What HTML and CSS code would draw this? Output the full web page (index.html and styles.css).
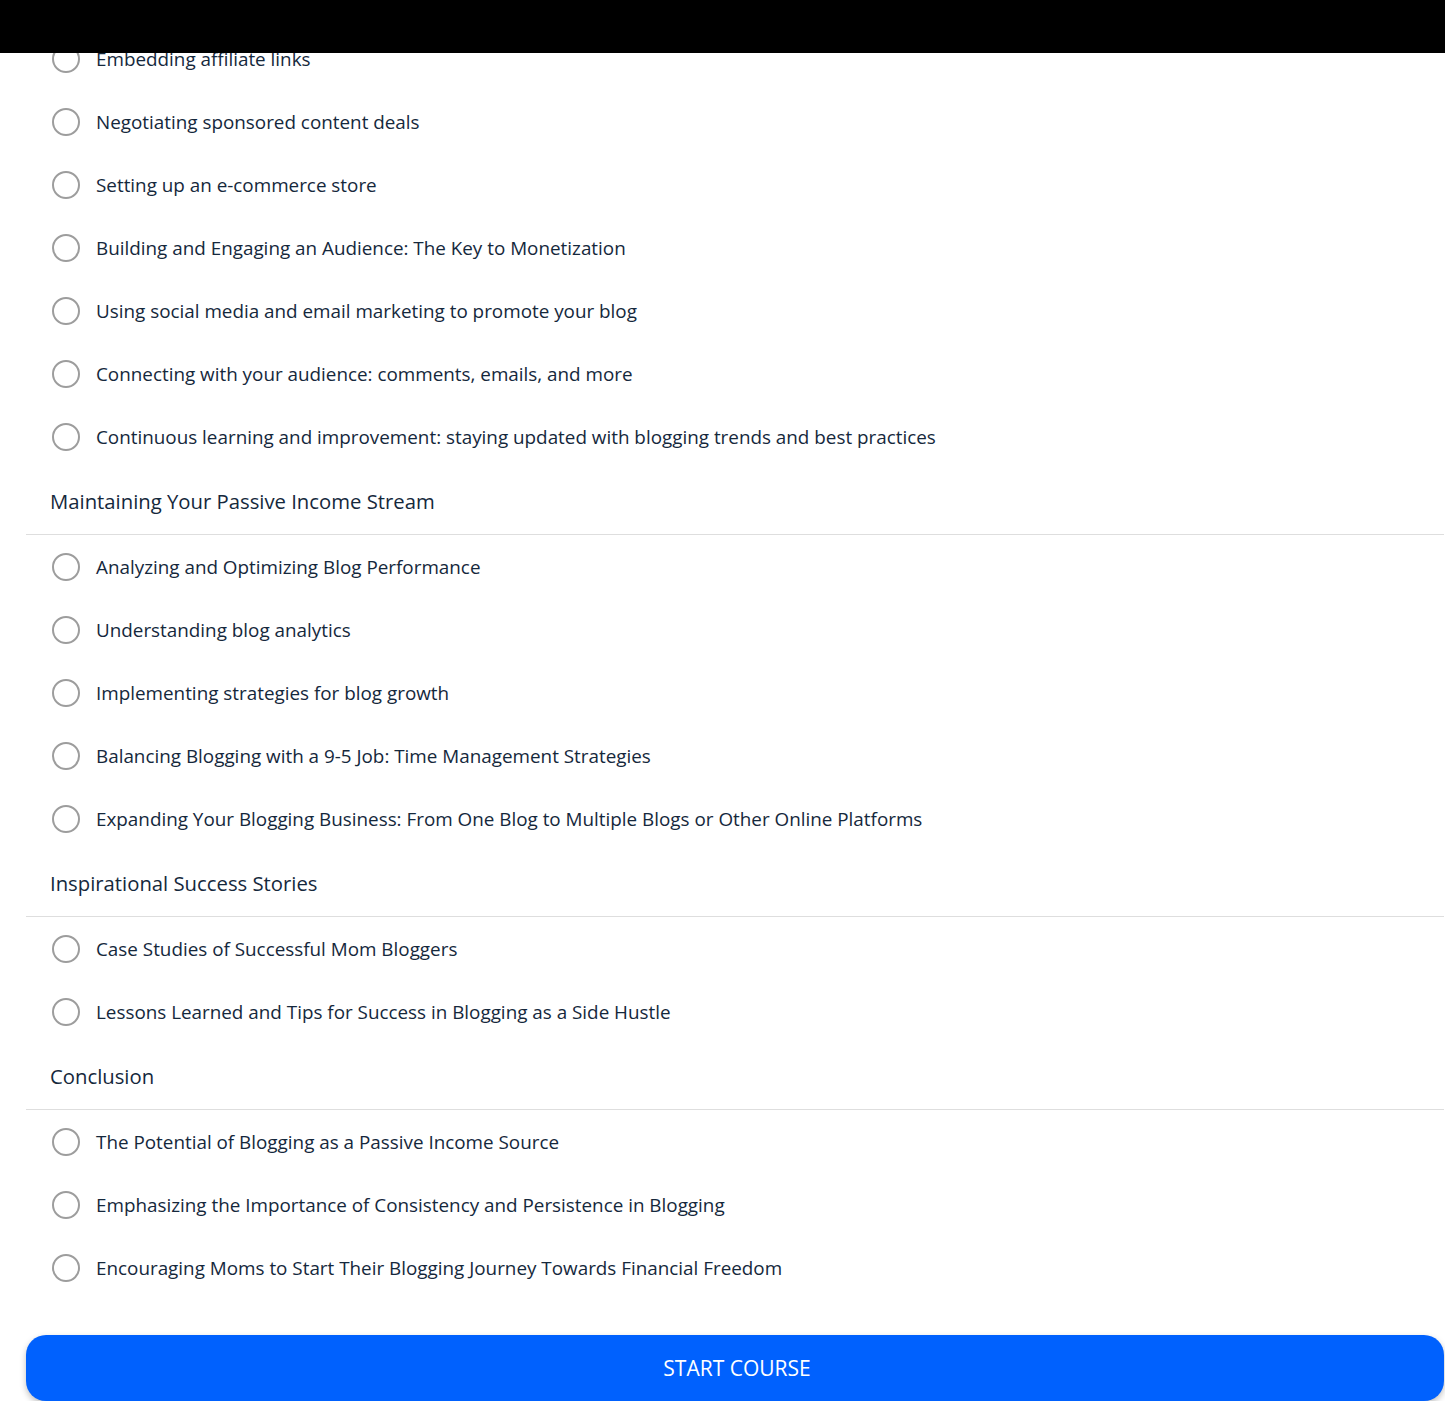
FILE: index.html
```html
<!DOCTYPE html>
<html lang="en">
<head>
  <meta charset="UTF-8" />
  <meta name="viewport" content="width=device-width, initial-scale=1.0"/>
  <title>Course Outline</title>
  <link rel="stylesheet" href="styles.css">
</head>
<body>

  <div class="topbar"></div>

  <div class="outline">
    <!-- Monetization (continued) -->
    <ul class="lessons">
      <li class="lesson"><span class="check"></span>Embedding affiliate links</li>
      <li class="lesson"><span class="check"></span>Negotiating sponsored content deals</li>
      <li class="lesson"><span class="check"></span>Setting up an e-commerce store</li>
      <li class="lesson"><span class="check"></span>Building and Engaging an Audience: The Key to Monetization</li>
      <li class="lesson"><span class="check"></span>Using social media and email marketing to promote your blog</li>
      <li class="lesson"><span class="check"></span>Connecting with your audience: comments, emails, and more</li>
      <li class="lesson"><span class="check"></span>Continuous learning and improvement: staying updated with blogging trends and best practices</li>
    </ul>

    <div class="section-title">Maintaining Your Passive Income Stream</div>
    <ul class="lessons">
      <li class="lesson"><span class="check"></span>Analyzing and Optimizing Blog Performance</li>
      <li class="lesson"><span class="check"></span>Understanding blog analytics</li>
      <li class="lesson"><span class="check"></span>Implementing strategies for blog growth</li>
      <li class="lesson"><span class="check"></span>Balancing Blogging with a 9-5 Job: Time Management Strategies</li>
      <li class="lesson"><span class="check"></span>Expanding Your Blogging Business: From One Blog to Multiple Blogs or Other Online Platforms</li>
    </ul>

    <div class="section-title">Inspirational Success Stories</div>
    <ul class="lessons">
      <li class="lesson"><span class="check"></span>Case Studies of Successful Mom Bloggers</li>
      <li class="lesson"><span class="check"></span>Lessons Learned and Tips for Success in Blogging as a Side Hustle</li>
    </ul>

    <div class="section-title">Conclusion</div>
    <ul class="lessons">
      <li class="lesson"><span class="check"></span>The Potential of Blogging as a Passive Income Source</li>
      <li class="lesson"><span class="check"></span>Emphasizing the Importance of Consistency and Persistence in Blogging</li>
      <li class="lesson"><span class="check"></span>Encouraging Moms to Start Their Blogging Journey Towards Financial Freedom</li>
    </ul>

    <button class="start-btn">START COURSE</button>
  </div>

</body>
</html>
```

FILE: styles.css
```css
:root {
  --text-main: #15283c;
  --circle: #9d9d9d;
  --divider: #dedede;
  --primary: #0061fe;
}

body {
  margin: 0;
  font-family: 'Open Sans', 'Liberation Sans', sans-serif;
  background: #fff;
  color: var(--text-main);
  overflow: hidden;
}

.topbar {
  position: fixed;
  top: 0;
  left: 0;
  right: 0;
  height: 53px;
  background: #000;
  z-index: 10;
}

.outline {
  margin: 27px 0 0 26px;
  width: 1418px;
}

.lessons {
  list-style: none;
  margin: 0;
  padding: 0;
}

.lesson {
  display: flex;
  align-items: center;
  gap: 16px;
  height: 63px;
  padding-left: 26px;
  font-size: 18.85px;
}

.check {
  width: 24px;
  height: 24px;
  border: 2.5px solid var(--circle);
  border-radius: 50%;
  flex-shrink: 0;
}

.section-title {
  display: flex;
  align-items: center;
  height: 67px;
  padding: 0 0 0 24px;
  box-sizing: border-box;
  font-size: 20.3px;
  border-bottom: 1px solid var(--divider);
}

.start-btn {
  display: block;
  width: 100%;
  height: 66px;
  margin-top: 36px;
  padding-left: 10px;
  border: none;
  border-radius: 20px;
  background: var(--primary);
  color: #fff;
  font-family: inherit;
  font-size: 21px;
  font-weight: 500;
  box-shadow: 0 3px 6px rgba(0,0,0,0.25);
}
```
